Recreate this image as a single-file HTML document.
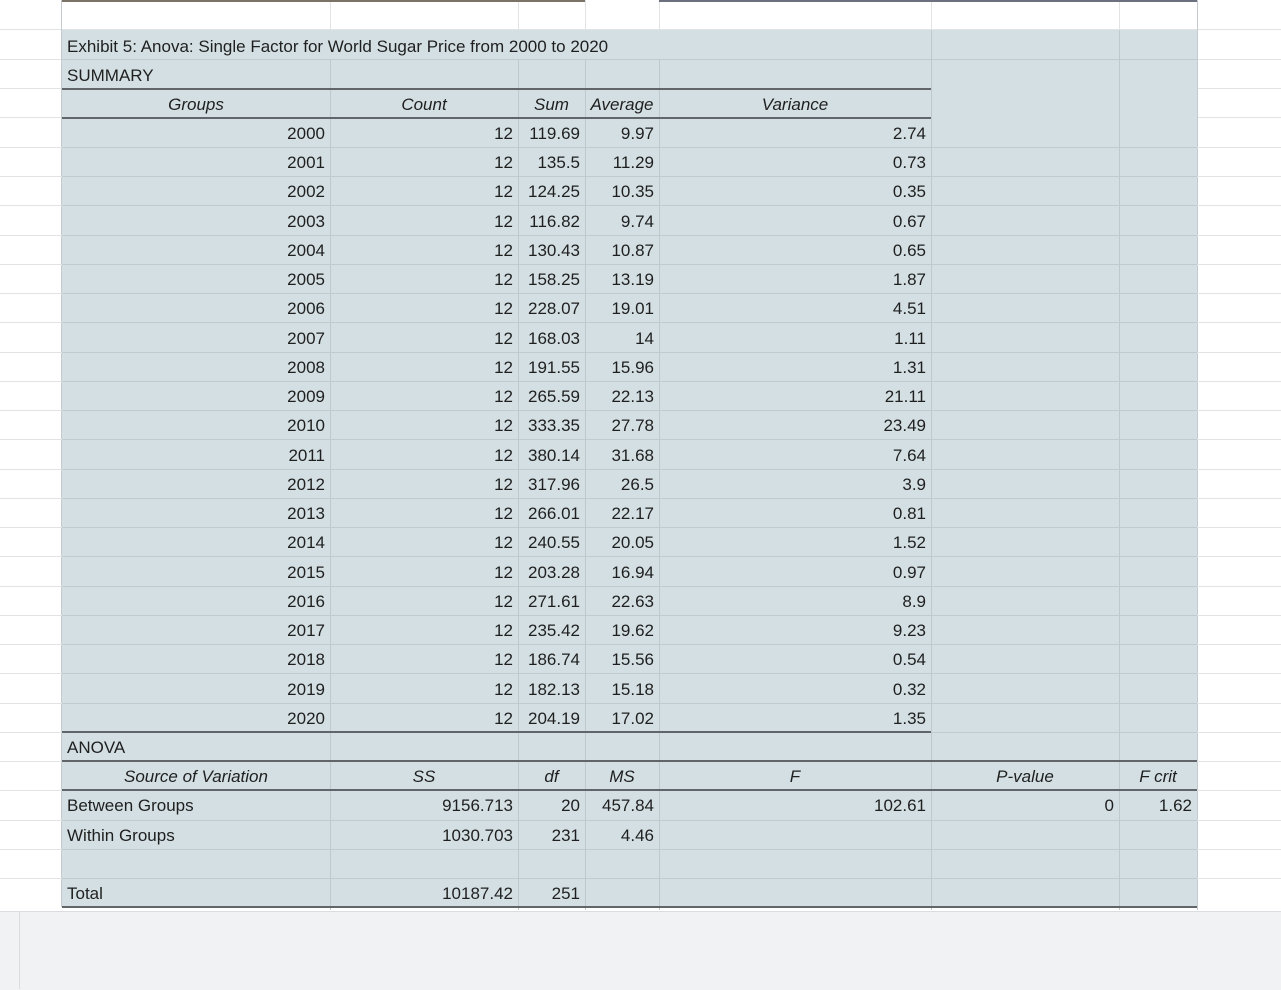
<!DOCTYPE html>
<html><head><meta charset="utf-8"><style>
body{margin:0;width:1281px;height:989px;overflow:hidden;background:#fff;font-family:"Liberation Sans",sans-serif;font-size:17px;color:#1f1f1f;position:relative}
.l{position:absolute}
.h{position:absolute;left:0;width:1281px;height:1px;background:#e2e3e3}
.sh{position:absolute;left:62px;top:30px;width:1135px;height:877px;background:#d3dfe3}
.v{position:absolute;width:1px;background:#bdc9cd}
.sv{position:absolute;left:62px;width:1135px;height:1px;background:#bfcbcf}
.tk{position:absolute;height:2px;background:#60666a}
.r{position:absolute;left:0;width:1281px;height:29px;line-height:30px}
.r span{position:absolute;top:0;box-sizing:border-box;padding:0 5px;white-space:nowrap;overflow:visible}
.a{left:62px;width:268px}.b{left:330px;width:188px}.c{left:518px;width:67px}.d{left:585px;width:74px}.e{left:659px;width:272px}.f{left:931px;width:188px}.g{left:1119px;width:78px}
.R{text-align:right}.C{text-align:center}.i{font-style:italic}
</style></head><body>
<div class="h" style="top:29px"></div>
<div class="sh"></div>
<!-- outer horizontal lines -->
<div class="h" style="top:59px;width:62px"></div><div class="h" style="top:88px;width:62px"></div><div class="h" style="top:117px;width:62px"></div>
<div class="h" style="top:59px;left:1197px;width:84px"></div><div class="h" style="top:88px;left:1197px;width:84px"></div><div class="h" style="top:117px;left:1197px;width:84px"></div>
<!-- internal -->
<div class="sv" style="top:59px"></div>
<div id="rows"></div>
<!-- vertical lines -->
<div class="v" style="left:61px;top:0;height:907px;background:#c4cbce"></div>
<div class="v" style="left:330px;top:0;height:30px;background:#e2e3e3"></div>
<div class="v" style="left:518px;top:0;height:30px;background:#e2e3e3"></div>
<div class="v" style="left:585px;top:0;height:30px;background:#e2e3e3"></div>
<div class="v" style="left:659px;top:0;height:30px;background:#e2e3e3"></div>
<div class="v" style="left:931px;top:0;height:30px;background:#e2e3e3"></div>
<div class="v" style="left:1119px;top:0;height:30px;background:#e2e3e3"></div>
<div class="v" style="left:330px;top:60px;height:850px"></div>
<div class="v" style="left:518px;top:60px;height:850px"></div>
<div class="v" style="left:585px;top:60px;height:850px"></div>
<div class="v" style="left:659px;top:60px;height:850px"></div>
<div class="v" style="left:931px;top:30px;height:880px"></div>
<div class="v" style="left:1119px;top:30px;height:880px"></div>
<div class="v" style="left:1197px;top:0;height:910px;background:#c4cbce"></div>
<!-- horizontal row lines in shaded -->
<div class="sv" style="top:147px"></div><div class="sv" style="top:176px"></div><div class="sv" style="top:205px"></div><div class="sv" style="top:235px"></div><div class="sv" style="top:264px"></div><div class="sv" style="top:293px"></div><div class="sv" style="top:322px"></div><div class="sv" style="top:352px"></div><div class="sv" style="top:381px"></div><div class="sv" style="top:410px"></div><div class="sv" style="top:439px"></div><div class="sv" style="top:469px"></div><div class="sv" style="top:498px"></div><div class="sv" style="top:527px"></div><div class="sv" style="top:556px"></div><div class="sv" style="top:586px"></div><div class="sv" style="top:615px"></div><div class="sv" style="top:644px"></div><div class="sv" style="top:673px"></div><div class="sv" style="top:703px"></div><div class="sv" style="top:732px"></div><div class="sv" style="top:820px"></div><div class="sv" style="top:849px"></div><div class="sv" style="top:878px"></div>
<div class="h" style="top:147px;left:1197px;width:84px"></div><div class="h" style="top:176px;left:1197px;width:84px"></div><div class="h" style="top:205px;left:1197px;width:84px"></div><div class="h" style="top:235px;left:1197px;width:84px"></div><div class="h" style="top:264px;left:1197px;width:84px"></div><div class="h" style="top:293px;left:1197px;width:84px"></div><div class="h" style="top:322px;left:1197px;width:84px"></div><div class="h" style="top:352px;left:1197px;width:84px"></div><div class="h" style="top:381px;left:1197px;width:84px"></div><div class="h" style="top:410px;left:1197px;width:84px"></div><div class="h" style="top:439px;left:1197px;width:84px"></div><div class="h" style="top:469px;left:1197px;width:84px"></div><div class="h" style="top:498px;left:1197px;width:84px"></div><div class="h" style="top:527px;left:1197px;width:84px"></div><div class="h" style="top:556px;left:1197px;width:84px"></div><div class="h" style="top:586px;left:1197px;width:84px"></div><div class="h" style="top:615px;left:1197px;width:84px"></div><div class="h" style="top:644px;left:1197px;width:84px"></div><div class="h" style="top:673px;left:1197px;width:84px"></div><div class="h" style="top:703px;left:1197px;width:84px"></div><div class="h" style="top:732px;left:1197px;width:84px"></div><div class="h" style="top:761px;left:1197px;width:84px"></div><div class="h" style="top:790px;left:1197px;width:84px"></div><div class="h" style="top:820px;left:1197px;width:84px"></div><div class="h" style="top:849px;left:1197px;width:84px"></div><div class="h" style="top:878px;left:1197px;width:84px"></div>
<div class="h" style="top:147px;width:62px"></div><div class="h" style="top:176px;width:62px"></div><div class="h" style="top:205px;width:62px"></div><div class="h" style="top:235px;width:62px"></div><div class="h" style="top:264px;width:62px"></div><div class="h" style="top:293px;width:62px"></div><div class="h" style="top:322px;width:62px"></div><div class="h" style="top:352px;width:62px"></div><div class="h" style="top:381px;width:62px"></div><div class="h" style="top:410px;width:62px"></div><div class="h" style="top:439px;width:62px"></div><div class="h" style="top:469px;width:62px"></div><div class="h" style="top:498px;width:62px"></div><div class="h" style="top:527px;width:62px"></div><div class="h" style="top:556px;width:62px"></div><div class="h" style="top:586px;width:62px"></div><div class="h" style="top:615px;width:62px"></div><div class="h" style="top:644px;width:62px"></div><div class="h" style="top:673px;width:62px"></div><div class="h" style="top:703px;width:62px"></div><div class="h" style="top:732px;width:62px"></div><div class="h" style="top:761px;width:62px"></div><div class="h" style="top:790px;width:62px"></div><div class="h" style="top:820px;width:62px"></div><div class="h" style="top:849px;width:62px"></div><div class="h" style="top:878px;width:62px"></div>
<!-- thick borders -->
<div class="tk" style="left:62px;top:0;width:523px;background:#7b7268"></div>
<div class="tk" style="left:659px;top:0;width:538px;background:#6c6f7e"></div>
<div class="tk" style="left:62px;top:88px;width:869px"></div>
<div class="tk" style="left:62px;top:117px;width:869px"></div>
<div class="tk" style="left:62px;top:731px;width:869px"></div>
<div class="tk" style="left:62px;top:760px;width:1135px"></div>
<div class="tk" style="left:62px;top:789px;width:1135px"></div>
<div class="tk" style="left:62px;top:906px;width:1135px"></div>
<!-- bottom panel -->
<div class="l" style="left:0;top:911px;width:1281px;height:78px;background:#f1f2f4;border-top:1px solid #dadce0"></div>
<div class="l" style="left:19px;top:912px;width:1px;height:77px;background:#dadce0"></div>

<div class="r" style="top:32px"><span class="a">Exhibit 5: Anova: Single Factor for World Sugar Price from 2000 to 2020</span></div>
<div class="r" style="top:61px"><span class="a">SUMMARY</span></div>
<div class="r i" style="top:90px"><span class="a C">Groups</span><span class="b C">Count</span><span class="c C">Sum</span><span class="d C">Average</span><span class="e C">Variance</span></div>
<div class="r" style="top:119px"><span class="a R">2000</span><span class="b R">12</span><span class="c R">119.69</span><span class="d R">9.97</span><span class="e R">2.74</span></div>
<div class="r" style="top:148px"><span class="a R">2001</span><span class="b R">12</span><span class="c R">135.5</span><span class="d R">11.29</span><span class="e R">0.73</span></div>
<div class="r" style="top:177px"><span class="a R">2002</span><span class="b R">12</span><span class="c R">124.25</span><span class="d R">10.35</span><span class="e R">0.35</span></div>
<div class="r" style="top:207px"><span class="a R">2003</span><span class="b R">12</span><span class="c R">116.82</span><span class="d R">9.74</span><span class="e R">0.67</span></div>
<div class="r" style="top:236px"><span class="a R">2004</span><span class="b R">12</span><span class="c R">130.43</span><span class="d R">10.87</span><span class="e R">0.65</span></div>
<div class="r" style="top:265px"><span class="a R">2005</span><span class="b R">12</span><span class="c R">158.25</span><span class="d R">13.19</span><span class="e R">1.87</span></div>
<div class="r" style="top:294px"><span class="a R">2006</span><span class="b R">12</span><span class="c R">228.07</span><span class="d R">19.01</span><span class="e R">4.51</span></div>
<div class="r" style="top:324px"><span class="a R">2007</span><span class="b R">12</span><span class="c R">168.03</span><span class="d R">14</span><span class="e R">1.11</span></div>
<div class="r" style="top:353px"><span class="a R">2008</span><span class="b R">12</span><span class="c R">191.55</span><span class="d R">15.96</span><span class="e R">1.31</span></div>
<div class="r" style="top:382px"><span class="a R">2009</span><span class="b R">12</span><span class="c R">265.59</span><span class="d R">22.13</span><span class="e R">21.11</span></div>
<div class="r" style="top:411px"><span class="a R">2010</span><span class="b R">12</span><span class="c R">333.35</span><span class="d R">27.78</span><span class="e R">23.49</span></div>
<div class="r" style="top:441px"><span class="a R">2011</span><span class="b R">12</span><span class="c R">380.14</span><span class="d R">31.68</span><span class="e R">7.64</span></div>
<div class="r" style="top:470px"><span class="a R">2012</span><span class="b R">12</span><span class="c R">317.96</span><span class="d R">26.5</span><span class="e R">3.9</span></div>
<div class="r" style="top:499px"><span class="a R">2013</span><span class="b R">12</span><span class="c R">266.01</span><span class="d R">22.17</span><span class="e R">0.81</span></div>
<div class="r" style="top:528px"><span class="a R">2014</span><span class="b R">12</span><span class="c R">240.55</span><span class="d R">20.05</span><span class="e R">1.52</span></div>
<div class="r" style="top:558px"><span class="a R">2015</span><span class="b R">12</span><span class="c R">203.28</span><span class="d R">16.94</span><span class="e R">0.97</span></div>
<div class="r" style="top:587px"><span class="a R">2016</span><span class="b R">12</span><span class="c R">271.61</span><span class="d R">22.63</span><span class="e R">8.9</span></div>
<div class="r" style="top:616px"><span class="a R">2017</span><span class="b R">12</span><span class="c R">235.42</span><span class="d R">19.62</span><span class="e R">9.23</span></div>
<div class="r" style="top:645px"><span class="a R">2018</span><span class="b R">12</span><span class="c R">186.74</span><span class="d R">15.56</span><span class="e R">0.54</span></div>
<div class="r" style="top:675px"><span class="a R">2019</span><span class="b R">12</span><span class="c R">182.13</span><span class="d R">15.18</span><span class="e R">0.32</span></div>
<div class="r" style="top:704px"><span class="a R">2020</span><span class="b R">12</span><span class="c R">204.19</span><span class="d R">17.02</span><span class="e R">1.35</span></div>
<div class="r" style="top:733px"><span class="a">ANOVA</span></div>
<div class="r i" style="top:762px"><span class="a C">Source of Variation</span><span class="b C">SS</span><span class="c C">df</span><span class="d C">MS</span><span class="e C">F</span><span class="f C">P-value</span><span class="g C">F crit</span></div>
<div class="r" style="top:791px"><span class="a">Between Groups</span><span class="b R">9156.713</span><span class="c R">20</span><span class="d R">457.84</span><span class="e R">102.61</span><span class="f R">0</span><span class="g R">1.62</span></div>
<div class="r" style="top:821px"><span class="a">Within Groups</span><span class="b R">1030.703</span><span class="c R">231</span><span class="d R">4.46</span></div>
<div class="r" style="top:879px"><span class="a">Total</span><span class="b R">10187.42</span><span class="c R">251</span></div>
</body></html>
